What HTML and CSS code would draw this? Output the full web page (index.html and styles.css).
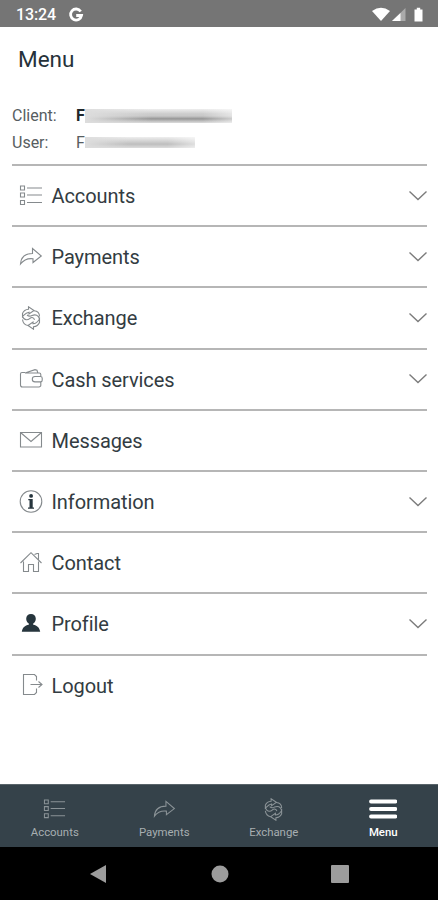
FILE: index.html
```html
<!DOCTYPE html>
<html lang="en">
<head>
<meta charset="utf-8">
<title>Menu</title>
<link rel="stylesheet" href="styles.css">
</head>
<body>
<svg class="defs" width="0" height="0">
  <symbol id="list" viewBox="0 0 24 24"><path d="M1.500 2h4v4h-4zM1.500 9h4v4h-4zM1.500 16.500h4v4h-4zM8 4h15M8 11h15M8 18.500h15"/></symbol>
  <symbol id="share" viewBox="0 0 24 24"><path d="M1.500 19C2 12 6 8.500 13.500 8.500V3.500L22.300 11L14 17.500V13.700C8 13 4.500 15 1.500 19z"/></symbol>
  <symbol id="exchange" viewBox="0 0 24 24"><path d="M3.500 10.500V7.500C4.500 5 7 3.500 9.500 3.300V.8L15 4.500L10 8V6.200C7 6.500 5.500 8.500 3.500 10.500zM20.500 13v3.500c-1 2.500-3 4-6 4.200v2.500L9 19.500l5-3.500v1.800c3.500 0 5-2.300 6.500-4.800zM3.500 10.500C5.500 15 9 14 11 12.300c2-1.500 4-.5 4.500 1.500M3.500 13.500c.5 4 2.500 5.500 5.500 6M20.500 13c-1-4-4-5-7.500-3.500-2 1-3.500.8-5-.5M20.500 10.500c0-3.500-2-5.500-5.500-5.800"/></symbol>
  <symbol id="wallet" viewBox="0 0 24 24"><path d="M6 5.500H3a1.500 1.500 0 0 0-1.500 1.500V18a2 2 0 0 0 2 2H20a1.800 1.800 0 0 0 1.800-1.800V15M21.800 9.500V7.500a1.500 1.500 0 0 0-1.500-1.500H6l10-3.300 2 .6.800 2.500M16 9.500h5.500a1.700 1.700 0 0 1 1.700 1.700v2a1.700 1.700 0 0 1-1.700 1.700H16a2.700 2.700 0 0 1 0-5.400z"/></symbol>
  <symbol id="mail" viewBox="0 0 24 24"><path d="M1.500 4.500h21v14.500h-21zM1.500 4.500L12 13.500L22.500 4.500"/></symbol>
  <symbol id="info" viewBox="0 0 24 24"><circle cx="12" cy="11.500" r="10.800"/><path class="solid" d="M9.300 9h4.400v8.500h1.300v1.300H9v-1.300h1.500v-7.200H9.300z"/><circle class="solid" cx="12.100" cy="5.900" r="1.900"/></symbol>
  <symbol id="home" viewBox="0 0 24 24"><path d="M1.500 12L12 1.700L22.500 12M4.500 10.500V20.500H9.500V13.500H14.500V20.500H19.500V10.500M15.500 3.500L18 2.500H19.500V8.500"/></symbol>
  <symbol id="user" viewBox="0 0 24 24"><path class="solid" d="M12 2c2.800 0 4.800 2 4.800 4.800 0 2-1 3.900-2.600 4.700v1.300c4 .8 6.300 2.700 7 7H2.800c.7-4.300 3-6.200 7-7V11.500c-1.600-.8-2.600-2.700-2.600-4.700C7.200 4 9.200 2 12 2z"/></symbol>
  <symbol id="logout" viewBox="0 0 24 24"><path d="M17.500 7.500V3.500L15.500 1.500H4.500V21.500H15.500L17.500 19.500V15.500M11.500 11.500H23M19.500 8.500L23 11.500L19.500 14.500"/></symbol>
  <symbol id="chevron" viewBox="0 0 20 12"><path d="M1.500 1.500L10 9.500L18.500 1.500"/></symbol>
</svg>

<header class="status">
  <span class="time">13:24</span>
  <svg class="google" viewBox="0 0 14 14"><path d="M11.700 3.500A5.500 5.500 0 1 0 12.500 7.500H7.200"/></svg>
  <svg class="signals" viewBox="0 0 54 16">
    <path fill="#fff" d="M1 4Q10-2.400 19 4L10 14z"/>
    <path fill="#aaa" d="M21 14L34.500 1V14z"/><path fill="#fff" d="M21 14L29.500 6V14z"/>
    <path fill="#fff" d="M43.500 2.500h2.300V.8h3.400v1.700h2.300v12h-8z"/>
  </svg>
</header>

<main class="page">
  <h1>Menu</h1>
  <dl class="identity">
    <dt>Client:</dt><dd class="client"><b>F</b><span class="smear"></span></dd>
    <dt>User:</dt><dd class="login">F<span class="smear"></span></dd>
  </dl>
  <nav class="menu">
    <a class="row"><svg class="icon"><use href="#list"/></svg><span>Accounts</span><svg class="chevron"><use href="#chevron"/></svg></a>
    <a class="row"><svg class="icon"><use href="#share"/></svg><span>Payments</span><svg class="chevron"><use href="#chevron"/></svg></a>
    <a class="row"><svg class="icon"><use href="#exchange"/></svg><span>Exchange</span><svg class="chevron"><use href="#chevron"/></svg></a>
    <a class="row"><svg class="icon"><use href="#wallet"/></svg><span>Cash services</span><svg class="chevron"><use href="#chevron"/></svg></a>
    <a class="row"><svg class="icon"><use href="#mail"/></svg><span>Messages</span></a>
    <a class="row"><svg class="icon"><use href="#info"/></svg><span>Information</span><svg class="chevron"><use href="#chevron"/></svg></a>
    <a class="row"><svg class="icon"><use href="#home"/></svg><span>Contact</span></a>
    <a class="row"><svg class="icon"><use href="#user"/></svg><span>Profile</span><svg class="chevron"><use href="#chevron"/></svg></a>
    <a class="row"><svg class="icon"><use href="#logout"/></svg><span>Logout</span></a>
  </nav>
</main>

<nav class="tabs">
  <a class="tab"><svg class="icon"><use href="#list"/></svg><span>Accounts</span></a>
  <a class="tab"><svg class="icon"><use href="#share"/></svg><span>Payments</span></a>
  <a class="tab"><svg class="icon"><use href="#exchange"/></svg><span>Exchange</span></a>
  <a class="tab active"><svg class="burger" viewBox="0 0 28 22"><path d="M2 3h24.500M2 10.500h24.500M2 18h24.500"/></svg><span>Menu</span></a>
</nav>
<footer class="system">
  <svg viewBox="0 0 18 20"><path d="M0 10L16 1V19z"/></svg>
  <svg viewBox="0 0 18 20"><circle cx="9" cy="10" r="8.500"/></svg>
  <svg viewBox="0 0 18 20"><rect y="1" width="18" height="18" rx="1"/></svg>
</footer>
</body>
</html>
```
FILE: styles.css
```css
* { box-sizing: border-box; }
body {
  margin: 0;
  height: 900px;
  display: flex;
  flex-direction: column;
  overflow: hidden;
  background: #fff;
  color: #333c42;
  font-family: Roboto, "Liberation Sans", sans-serif;
}
.defs { position: absolute; }
.status {
  height: 27px;
  flex: none;
  display: flex;
  align-items: center;
  padding: 2px 13px 0 16px;
  background: #757575;
  color: #fff;
}
.time { width: 53px; font-size: 16px; font-weight: 500; letter-spacing: -0.1px; }
.google { width: 14px; height: 14px; fill: none; stroke: #fff; stroke-width: 2.8; overflow: visible; }
.signals { width: 54px; height: 16px; margin-left: auto; }
.page { flex: 1; padding: 0 11px 0 12px; }
h1 {
  margin: 0;
  padding: 18px 0 0 6px;
  font-size: 22.5px;
  line-height: 28px;
  font-weight: 450;
  color: #26323a;
}
.identity {
  display: grid;
  grid-template-columns: 64px 1fr;
  grid-auto-rows: 27px;
  align-items: center;
  margin: 29px 0 8px;
  font-size: 16px;
  color: #575d61;
}
.identity dd { margin: 0; display: flex; align-items: center; }
.client b { color: #20282c; font-weight: 700; }
.smear { display: block; filter: blur(0.6px); }
.client .smear {
  width: 147px;
  height: 14px;
  background: linear-gradient(90deg, #ddd, transparent 45%, transparent 80%, #ffffff80),
    linear-gradient(#eee, #ccc 35%, #c8c8c8 50%, #969696 70%, #b5b5b5 82%, #ddd);
}
.login .smear {
  width: 110px;
  height: 11px;
  background: linear-gradient(90deg, #ddd, transparent 40%, transparent 75%, #ffffff80),
    linear-gradient(#eee, #d4d4d4 35%, #bebebe 65%, #ddd);
}
.row {
  display: flex;
  align-items: center;
  height: 61.2px;
  border-top: 2px solid #b6b6b6;
  padding-left: 7px;
  font-size: 20px;
  letter-spacing: -0.08px;
}
.row span { margin-left: 8.5px; padding-top: 1px; }
.icon {
  width: 24px;
  height: 24px;
  fill: none;
  stroke: #858a8d;
  stroke-width: 1.1;
}
.solid { fill: #26353d; stroke: none; }
.chevron {
  width: 20px;
  height: 12px;
  margin: 0 -1px 0 auto;
  fill: none;
  stroke: #7c7c7c;
  stroke-width: 1.4;
}
.tabs {
  height: 63px;
  flex: none;
  display: grid;
  grid-template-columns: repeat(4, 1fr);
  background: #35424a;
  border-top: 1px solid #59646a;
}
.tab {
  display: flex;
  flex-direction: column;
  align-items: center;
  padding-top: 13px;
  font-size: 11.4px;
  color: #a7aeb1;
}
.tab .icon { width: 23px; height: 23px; stroke: #8b9397; }
.tab span { margin-top: 4px; line-height: 14px; }
.tab.active { color: #fff; font-weight: 500; }
.burger { width: 28px; height: 23px; fill: none; stroke: #fff; stroke-width: 3.8; stroke-linecap: round; }
.system {
  height: 53px;
  flex: none;
  display: flex;
  justify-content: space-between;
  padding: 17px 89px 0 90px;
  background: #000;
}
.system svg { width: 18px; height: 20px; fill: #9c9c9c; }
```
